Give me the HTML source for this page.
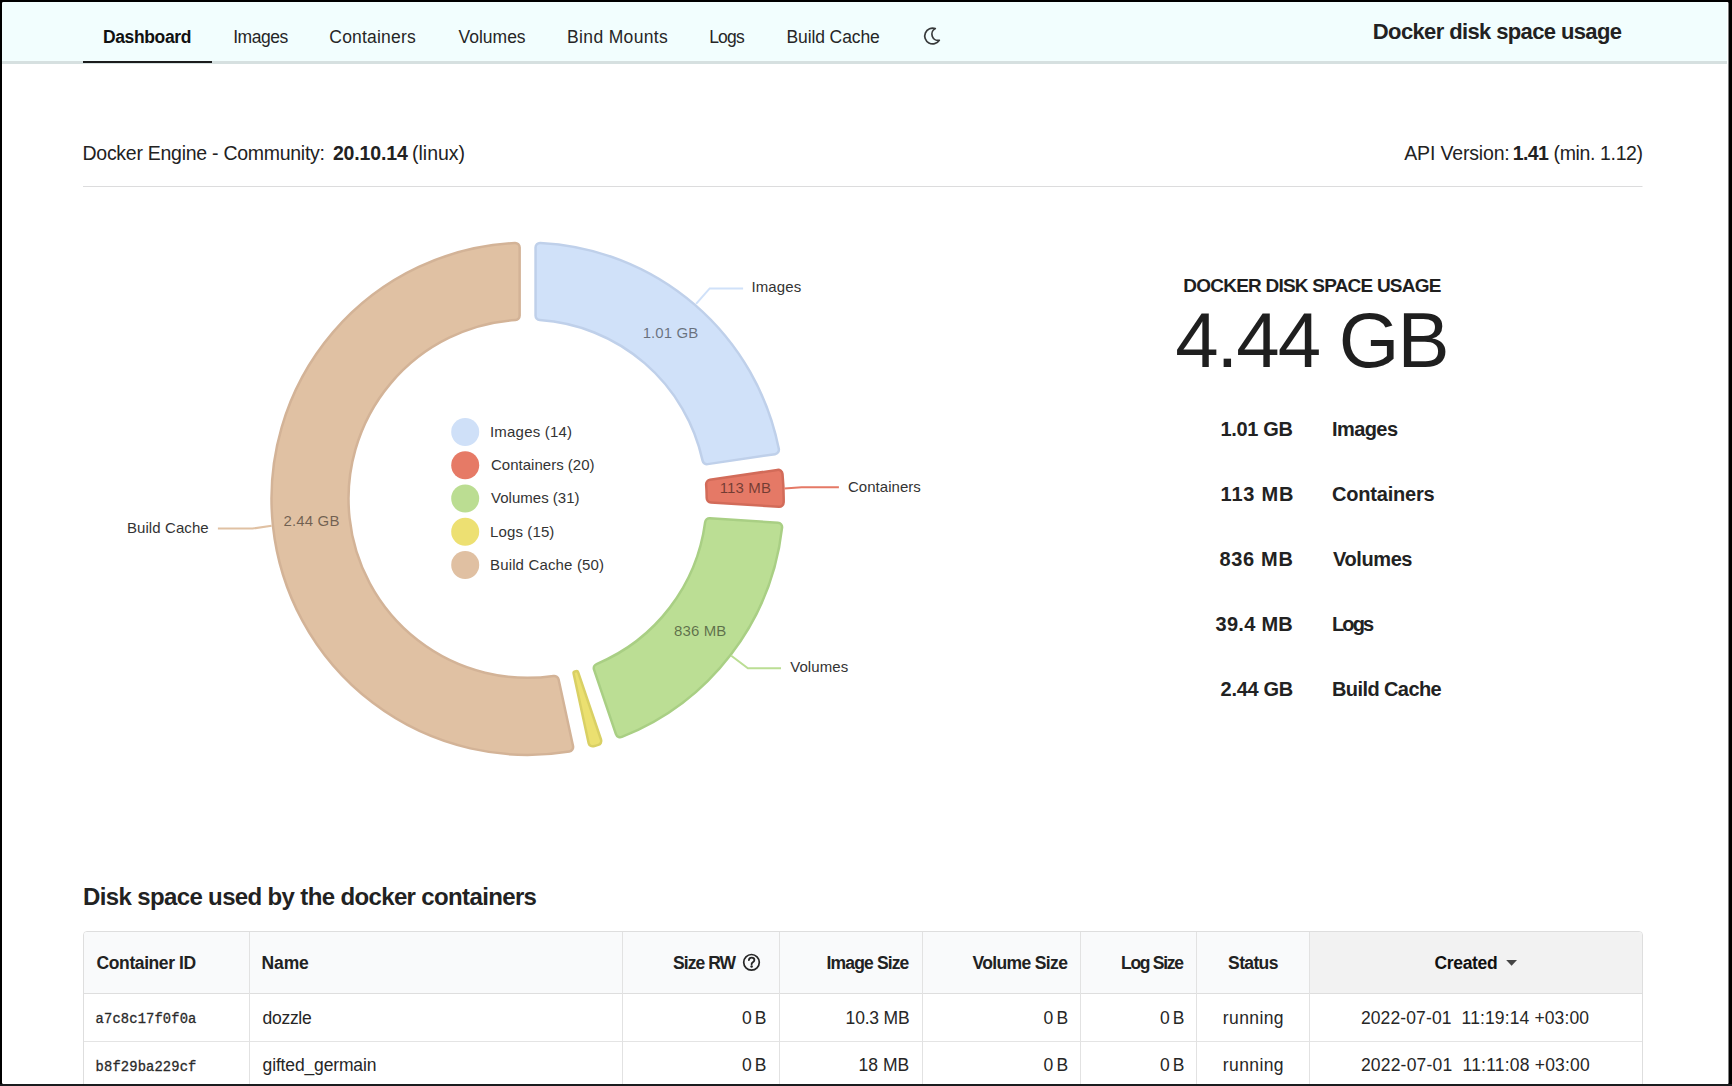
<!DOCTYPE html>
<html><head><meta charset="utf-8"><title>Docker disk space usage</title>
<style>
html,body{margin:0;padding:0;width:1732px;height:1086px;overflow:hidden;background:#000;}
body{font-family:"Liberation Sans", sans-serif;position:relative;}
#win{position:absolute;left:2px;top:2px;width:1727px;height:1082px;background:#fff;overflow:hidden;border-radius:1.5px;}
.t{position:absolute;white-space:pre;line-height:1;font-family:"Liberation Sans", sans-serif;}
.abs{position:absolute;}
</style></head><body>
<div id="win"></div>
<div class="abs" style="left:2px;top:2px;width:1725px;height:58.5px;background:#f2fefe;border-top-right-radius:2px;border-top-left-radius:1.5px"></div>
<div class="abs" style="left:2px;top:60.5px;width:1725px;height:3px;background:#d6e0e0"></div>
<div class="abs" style="left:82.5px;top:60.5px;width:129.3px;height:2.8px;background:#1b1c1d"></div>
<svg class="abs" style="left:0;top:0" width="1732" height="1086" viewBox="0 0 1732 1086">
<path d="M935.3,28.6 A7.9,7.9 0 1 0 939.3,40.3 A6.25,6.25 0 0 1 935.3,28.6 Z" fill="none" stroke="#383a3b" stroke-width="1.7" stroke-linejoin="round"/>
<rect x="83" y="186" width="1559.5" height="1" fill="#dcdcdd"/>
<path d="M540.27,242.96 A256.1,256.1 0 0 1 778.79,448.85 A4.5,4.5 0 0 1 775.03,454.18 L707.65,464.13 A4.5,4.5 0 0 1 702.60,460.63 A179.1,179.1 0 0 0 539.74,320.06 A4.5,4.5 0 0 1 535.55,315.57 L535.55,247.46 A4.5,4.5 0 0 1 540.27,242.96 Z" fill="#d0e1f9" stroke="#bfd0ea" stroke-width="2.5"/>
<path d="M782.49,473.92 A256.1,256.1 0 0 1 783.67,502.34 A4.5,4.5 0 0 1 778.89,506.77 L710.91,502.45 A4.5,4.5 0 0 1 706.70,497.97 A179.1,179.1 0 0 0 706.15,484.66 A4.5,4.5 0 0 1 709.97,479.86 L777.36,469.91 A4.5,4.5 0 0 1 782.49,473.92 Z" fill="#e57966" stroke="#d26b59" stroke-width="2.5"/>
<path d="M782.07,527.64 A256.1,256.1 0 0 1 621.86,736.87 A4.5,4.5 0 0 1 615.94,734.13 L594.04,669.64 A4.5,4.5 0 0 1 596.57,664.04 A179.1,179.1 0 0 0 705.16,522.21 A4.5,4.5 0 0 1 709.90,518.31 L777.88,522.64 A4.5,4.5 0 0 1 782.07,527.64 Z" fill="#bbde94" stroke="#a9cf84" stroke-width="2.5"/>
<path d="M598.38,744.88 A256.1,256.1 0 0 1 593.61,746.20 A4,4 0 0 1 588.67,743.18 L573.60,673.61 A1.8,1.8 0 0 1 574.89,671.49 A179.1,179.1 0 0 0 575.98,671.19 A1.8,1.8 0 0 1 578.17,672.35 L601.06,739.75 A4,4 0 0 1 598.38,744.88 Z" fill="#ebe070" stroke="#d9d064" stroke-width="2.5"/>
<path d="M569.36,751.42 A256.1,256.1 0 1 1 514.93,242.96 A4.5,4.5 0 0 1 519.65,247.46 L519.65,315.57 A4.5,4.5 0 0 1 515.46,320.06 A179.1,179.1 0 1 0 553.55,675.96 A4.5,4.5 0 0 1 558.60,679.46 L573.02,746.03 A4.5,4.5 0 0 1 569.36,751.42 Z" fill="#e0c1a3" stroke="#d3b397" stroke-width="2.5"/>
<polyline points="696.1,303.8 709.7,288.4 743.1,288.4" fill="none" stroke="#d0e1f9" stroke-width="2"/>
<polyline points="784.3,488.6 801.6,487.3 838.9,487.3" fill="none" stroke="#e57966" stroke-width="2"/>
<polyline points="731.3,655.8 747.9,668.3 781.0,668.3" fill="none" stroke="#bbde94" stroke-width="2"/>
<polyline points="271.6,525.8 252.5,528.6 217.9,528.6" fill="none" stroke="#e0c1a3" stroke-width="2"/>
<circle cx="465.2" cy="432.00" r="14" fill="#cfe0f8"/>
<circle cx="465.2" cy="465.25" r="14" fill="#e67a66"/>
<circle cx="465.2" cy="498.50" r="14" fill="#bbdd92"/>
<circle cx="465.2" cy="531.75" r="14" fill="#ede072"/>
<circle cx="465.2" cy="565.00" r="14" fill="#e0c0a2"/>
</svg>
<div class="abs" style="left:83px;top:931px;width:1559.8px;height:200px;border:1px solid #dedede;border-radius:4px;background:#fff;box-sizing:border-box"></div>
<div class="abs" style="left:84px;top:932px;width:1225.5px;height:61px;background:#f9fafb;border-top-left-radius:3px"></div>
<div class="abs" style="left:1310px;top:932px;width:331.8px;height:61px;background:#f2f2f2;border-top-right-radius:3px"></div>
<div class="abs" style="left:84px;top:992.5px;width:1557.8px;height:1px;background:#dedede"></div>
<div class="abs" style="left:84px;top:1041px;width:1557.8px;height:1px;background:#e4e4e4"></div>
<div class="abs" style="left:248.7px;top:932px;width:1px;height:160px;background:#e2e2e2"></div>
<div class="abs" style="left:622.1px;top:932px;width:1px;height:160px;background:#e2e2e2"></div>
<div class="abs" style="left:778.7px;top:932px;width:1px;height:160px;background:#e2e2e2"></div>
<div class="abs" style="left:921.8px;top:932px;width:1px;height:160px;background:#e2e2e2"></div>
<div class="abs" style="left:1080.3px;top:932px;width:1px;height:160px;background:#e2e2e2"></div>
<div class="abs" style="left:1196.2px;top:932px;width:1px;height:160px;background:#e2e2e2"></div>
<div class="abs" style="left:1309.0px;top:932px;width:1px;height:160px;background:#e2e2e2"></div>
<svg class="abs" style="left:0;top:0" width="1732" height="1086"><circle cx="751.5" cy="962.3" r="7.8" fill="none" stroke="#262626" stroke-width="1.7"/><path d="M748.9,960.1 C749.1,958.5 750.1,957.7 751.6,957.7 C753.2,957.7 754.4,958.7 754.4,960.1 C754.4,961.3 753.5,962 752.6,962.6 C751.9,963.1 751.6,963.5 751.6,964.3" fill="none" stroke="#262626" stroke-width="1.8" stroke-linecap="round"/><circle cx="751.6" cy="966.5" r="1.25" fill="#262626"/><path d="M1506.2,960 L1517,960 L1511.6,965.8 Z" fill="#444"/></svg>
<div class="t" style="left:103.0px;top:29.0px;font-size:17.5px;font-weight:700;letter-spacing:-0.375px;color:#111">Dashboard</div>
<div class="t" style="left:233.2px;top:29.0px;font-size:17.5px;letter-spacing:-0.46px;color:#262626">Images</div>
<div class="t" style="left:329.3px;top:29.0px;font-size:17.5px;letter-spacing:0.2px;color:#262626">Containers</div>
<div class="t" style="left:458.6px;top:29.0px;font-size:17.5px;letter-spacing:-0.017px;color:#262626">Volumes</div>
<div class="t" style="left:567.1px;top:29.0px;font-size:17.5px;letter-spacing:0.34px;color:#262626">Bind Mounts</div>
<div class="t" style="left:709.2px;top:29.0px;font-size:17.5px;letter-spacing:-0.833px;color:#262626">Logs</div>
<div class="t" style="left:786.5px;top:29.0px;font-size:17.5px;letter-spacing:-0.11px;color:#262626">Build Cache</div>
<div class="t" style="left:1372.8px;top:21.2px;font-size:22px;font-weight:700;letter-spacing:-0.623px;color:#222">Docker disk space usage</div>
<div class="t" style="left:82.5px;top:144.2px;font-size:19.5px;letter-spacing:-0.272px;color:#222">Docker Engine - Community:</div>
<div class="t" style="left:332.9px;top:144.2px;font-size:19.5px;font-weight:700;letter-spacing:-0.129px;color:#222">20.10.14</div>
<div class="t" style="left:412.0px;top:144.2px;font-size:19.5px;color:#222">(linux)</div>
<div class="t" style="left:1404.2px;top:144.4px;font-size:19.5px;letter-spacing:-0.155px;color:#222">API Version:</div>
<div class="t" style="left:1512.8px;top:144.4px;font-size:19.5px;font-weight:700;letter-spacing:-0.6px;color:#222">1.41</div>
<div class="t" style="left:1553.6px;top:144.4px;font-size:19.5px;letter-spacing:-0.37px;color:#222">(min. 1.12)</div>
<div class="t" style="left:1183.3px;top:276.0px;font-size:19px;font-weight:700;letter-spacing:-0.777px;color:#1f1f1f">DOCKER DISK SPACE USAGE</div>
<div class="t" style="left:1175.2px;top:301.1px;font-size:78px;letter-spacing:-1.967px;color:#1f1f1f">4.44 GB</div>
<div class="t" style="left:1220.6px;top:418.6px;font-size:20px;font-weight:700;letter-spacing:-0.35px;color:#222">1.01 GB</div>
<div class="t" style="left:1332.0px;top:418.6px;font-size:20px;font-weight:700;letter-spacing:-0.58px;color:#222">Images</div>
<div class="t" style="left:1220.6px;top:483.75px;font-size:20px;font-weight:700;letter-spacing:0.8px;color:#222">113 MB</div>
<div class="t" style="left:1332.0px;top:483.75px;font-size:20px;font-weight:700;letter-spacing:-0.2px;color:#222">Containers</div>
<div class="t" style="left:1219.6px;top:548.9px;font-size:20px;font-weight:700;letter-spacing:0.64px;color:#222">836 MB</div>
<div class="t" style="left:1333.0px;top:548.9px;font-size:20px;font-weight:700;letter-spacing:-0.4px;color:#222">Volumes</div>
<div class="t" style="left:1215.6px;top:614.05px;font-size:20px;font-weight:700;letter-spacing:0.267px;color:#222">39.4 MB</div>
<div class="t" style="left:1332.0px;top:614.05px;font-size:20px;font-weight:700;letter-spacing:-1.9px;color:#222">Logs</div>
<div class="t" style="left:1220.6px;top:679.2px;font-size:20px;font-weight:700;letter-spacing:-0.3px;color:#222">2.44 GB</div>
<div class="t" style="left:1332.0px;top:679.2px;font-size:20px;font-weight:700;letter-spacing:-0.59px;color:#222">Build Cache</div>
<div class="t" style="left:83.1px;top:884.9px;font-size:24px;font-weight:700;letter-spacing:-0.641px;color:#222">Disk space used by the docker containers</div>
<div class="t" style="left:96.6px;top:954.9px;font-size:17.5px;font-weight:700;letter-spacing:-0.409px;color:#222">Container ID</div>
<div class="t" style="left:261.6px;top:954.9px;font-size:17.5px;font-weight:700;letter-spacing:-0.167px;color:#222">Name</div>
<div class="t" style="left:673.0px;top:954.9px;font-size:17.5px;font-weight:700;letter-spacing:-0.933px;color:#222">Size RW</div>
<div class="t" style="left:826.6px;top:954.9px;font-size:17.5px;font-weight:700;letter-spacing:-0.856px;color:#222">Image Size</div>
<div class="t" style="left:972.6px;top:954.9px;font-size:17.5px;font-weight:700;letter-spacing:-0.65px;color:#222">Volume Size</div>
<div class="t" style="left:1121.0px;top:954.9px;font-size:17.5px;font-weight:700;letter-spacing:-1.286px;color:#222">Log Size</div>
<div class="t" style="left:1228.1px;top:954.9px;font-size:17.5px;font-weight:700;letter-spacing:-0.64px;color:#222">Status</div>
<div class="t" style="left:1434.5px;top:954.9px;font-size:17.5px;font-weight:700;letter-spacing:-0.333px;color:#111">Created</div>
<div class="t" style="left:95.6px;top:1013.0px;font-size:13.8px;font-family:'Liberation Mono', monospace;-webkit-text-stroke:0.3px #333;letter-spacing:0.127px;color:#262626">a7c8c17f0f0a</div>
<div class="t" style="left:262.6px;top:1009.8px;font-size:17.5px;letter-spacing:-0.3px;color:#262626">dozzle</div>
<div class="t" style="left:741.9px;top:1009.8px;font-size:17.5px;letter-spacing:-0.9px;color:#262626">0 B</div>
<div class="t" style="left:845.6px;top:1009.8px;font-size:17.5px;letter-spacing:-0.2px;color:#262626">10.3 MB</div>
<div class="t" style="left:1043.6px;top:1009.8px;font-size:17.5px;letter-spacing:-0.9px;color:#262626">0 B</div>
<div class="t" style="left:1160.0px;top:1009.8px;font-size:17.5px;letter-spacing:-0.9px;color:#262626">0 B</div>
<div class="t" style="left:1222.8px;top:1009.8px;font-size:17.5px;letter-spacing:0.4px;color:#262626">running</div>
<div class="t" style="left:1360.9px;top:1009.8px;font-size:17.5px;letter-spacing:0.123px;color:#262626">2022-07-01  11:19:14 +03:00</div>
<div class="t" style="left:95.6px;top:1060.5px;font-size:13.8px;font-family:'Liberation Mono', monospace;-webkit-text-stroke:0.3px #333;letter-spacing:0.127px;color:#262626">b8f29ba229cf</div>
<div class="t" style="left:262.6px;top:1057.3px;font-size:17.5px;letter-spacing:-0.154px;color:#262626">gifted_germain</div>
<div class="t" style="left:741.9px;top:1057.3px;font-size:17.5px;letter-spacing:-0.9px;color:#262626">0 B</div>
<div class="t" style="left:858.6px;top:1057.3px;font-size:17.5px;letter-spacing:0.025px;color:#262626">18 MB</div>
<div class="t" style="left:1043.6px;top:1057.3px;font-size:17.5px;letter-spacing:-0.9px;color:#262626">0 B</div>
<div class="t" style="left:1160.0px;top:1057.3px;font-size:17.5px;letter-spacing:-0.9px;color:#262626">0 B</div>
<div class="t" style="left:1222.8px;top:1057.3px;font-size:17.5px;letter-spacing:0.4px;color:#262626">running</div>
<div class="t" style="left:1360.9px;top:1057.3px;font-size:17.5px;letter-spacing:0.2px;color:#262626">2022-07-01  11:11:08 +03:00</div>
<div class="t" style="left:751.4px;top:279.4px;font-size:15px;letter-spacing:0.12px;color:#333">Images</div>
<div class="t" style="left:848.0px;top:478.6px;font-size:15px;letter-spacing:0.033px;color:#333">Containers</div>
<div class="t" style="left:790.2px;top:659.3px;font-size:15px;letter-spacing:0.083px;color:#333">Volumes</div>
<div class="t" style="left:126.9px;top:520.0px;font-size:15px;letter-spacing:0.09px;color:#333">Build Cache</div>
<div class="t" style="left:642.65px;top:324.9px;font-size:15px;letter-spacing:0.083px;color:rgba(0,0,0,0.5)">1.01 GB</div>
<div class="t" style="left:719.7px;top:480.4px;font-size:15px;letter-spacing:0.14px;color:rgba(0,0,0,0.5)">113 MB</div>
<div class="t" style="left:674.05px;top:622.9px;font-size:15px;letter-spacing:0.1px;color:rgba(0,0,0,0.5)">836 MB</div>
<div class="t" style="left:283.6px;top:513.0px;font-size:15px;letter-spacing:0.133px;color:rgba(0,0,0,0.5)">2.44 GB</div>
<div class="t" style="left:490.0px;top:423.9px;font-size:15px;letter-spacing:0.2px;color:#333">Images (14)</div>
<div class="t" style="left:491.0px;top:457.15px;font-size:15px;letter-spacing:0.014px;color:#333">Containers (20)</div>
<div class="t" style="left:491.0px;top:490.4px;font-size:15px;letter-spacing:0.018px;color:#333">Volumes (31)</div>
<div class="t" style="left:490.0px;top:523.65px;font-size:15px;letter-spacing:0.125px;color:#333">Logs (15)</div>
<div class="t" style="left:490.0px;top:556.9px;font-size:15px;letter-spacing:0.153px;color:#333">Build Cache (50)</div>
<div class="abs" style="left:0;top:0;width:1732px;height:2px;background:#000"></div>
<div class="abs" style="left:0;top:0;width:2px;height:1086px;background:#000"></div>
<svg class="abs" style="left:0;top:0" width="1732" height="1086"><rect x="1728.5" y="0" width="3.5" height="1086" fill="#000"/></svg>
<div class="abs" style="left:0;top:1084px;width:1732px;height:2px;background:#1a1c1e"></div>
</body></html>
